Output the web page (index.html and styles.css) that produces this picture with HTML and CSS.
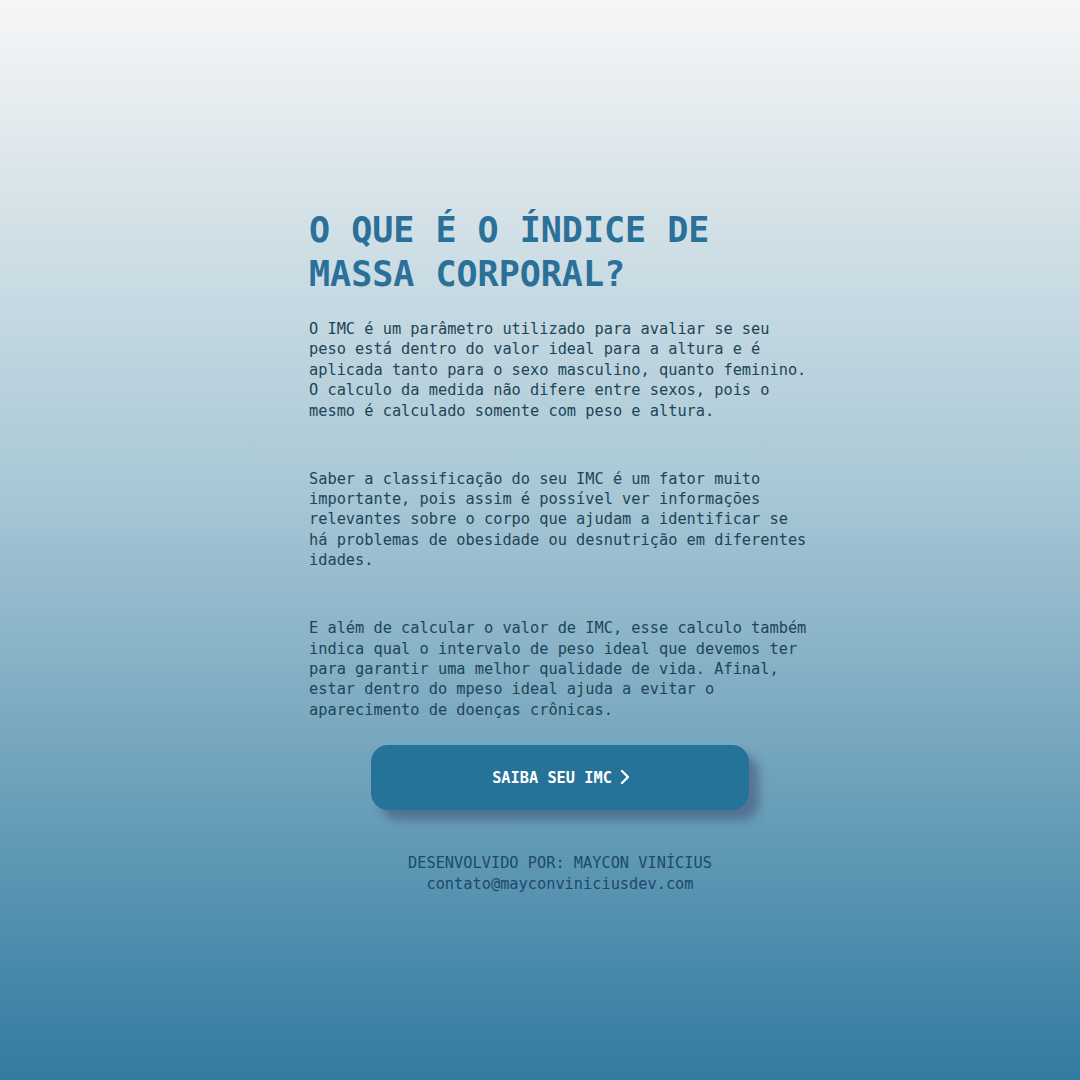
FILE: index.html
```html
<!DOCTYPE html>
<html lang="pt-BR">
<head>
<meta charset="utf-8">
<title>IMC</title>
<link rel="stylesheet" href="styles.css">
</head>
<body>
<main class="page">
  <section class="content">
    <h1 class="title">O QUE É O ÍNDICE DE MASSA CORPORAL?</h1>
    <p class="text">O IMC é um parâmetro utilizado para avaliar se seu peso está dentro do valor ideal para a altura e é aplicada tanto para o sexo masculino, quanto feminino. O calculo da medida não difere entre sexos, pois o mesmo é calculado somente com peso e altura.</p>
    <p class="text">Saber a classificação do seu IMC é um fator muito importante, pois assim é possível ver informações relevantes sobre o corpo que ajudam a identificar se há problemas de obesidade ou desnutrição em diferentes idades.</p>
    <p class="text">E além de calcular o valor de IMC, esse calculo também indica qual o intervalo de peso ideal que devemos ter para garantir uma melhor qualidade de vida. Afinal, estar dentro do mpeso ideal ajuda a evitar o aparecimento de doenças crônicas.</p>
    <div class="actions">
      <button class="btn" type="button">SAIBA SEU IMC
        <svg class="chev" width="10" height="16" viewBox="0 0 10 16" aria-hidden="true"><path d="M2 2 L8 8 L2 14" fill="none" stroke="#ffffff" stroke-width="2.4" stroke-linecap="round" stroke-linejoin="round"/></svg>
      </button>
    </div>
    <footer class="footer">
      <div>DESENVOLVIDO POR: MAYCON VINÍCIUS</div>
      <div>contato@mayconviniciusdev.com</div>
    </footer>
  </section>
</main>
</body>
</html>
```

FILE: styles.css
```css
html, body {
  margin: 0;
  padding: 0;
}
body {
  width: 1080px;
  height: 1080px;
  background: linear-gradient(to bottom, #f6f6f6 0%, #a9c8d6 45%, #327ba0 100%);
  font-family: "DejaVu Sans Mono", "Liberation Mono", monospace;
  overflow: hidden;
}
.page {
  display: flex;
  justify-content: center;
  padding-left: 40px;
  padding-top: 208px;
}
.content {
  width: 502px;
  display: flex;
  flex-direction: column;
}
.title {
  margin: 0 0 23px 0;
  font-size: 35px;
  line-height: 44px;
  font-weight: bold;
  color: #2a7098;
  width: 420px;
}
.text {
  margin: 0 0 47.6px 0;
  font-size: 15.3px;
  line-height: 20.4px;
  color: #1d4557;
}
.text:last-of-type {
  margin-bottom: 25px;
}
.actions {
  display: flex;
  justify-content: center;
}
.btn {
  width: 378px;
  height: 65px;
  border: none;
  border-radius: 17px;
  background: #26739a;
  color: #ffffff;
  font-family: "DejaVu Sans Mono", "Liberation Mono", monospace;
  font-weight: bold;
  font-size: 15.3px;
  display: flex;
  align-items: center;
  justify-content: center;
  gap: 8px;
  box-shadow: 10px 10px 10px rgba(60, 60, 100, 0.45);
  padding: 0 0 0 2px;
}
.chev {
  display: block;
  margin-top: -2px;
}
.footer {
  margin-top: 43px;
  text-align: center;
  font-size: 15.3px;
  line-height: 20.8px;
  color: #1c4a68;
}
```
